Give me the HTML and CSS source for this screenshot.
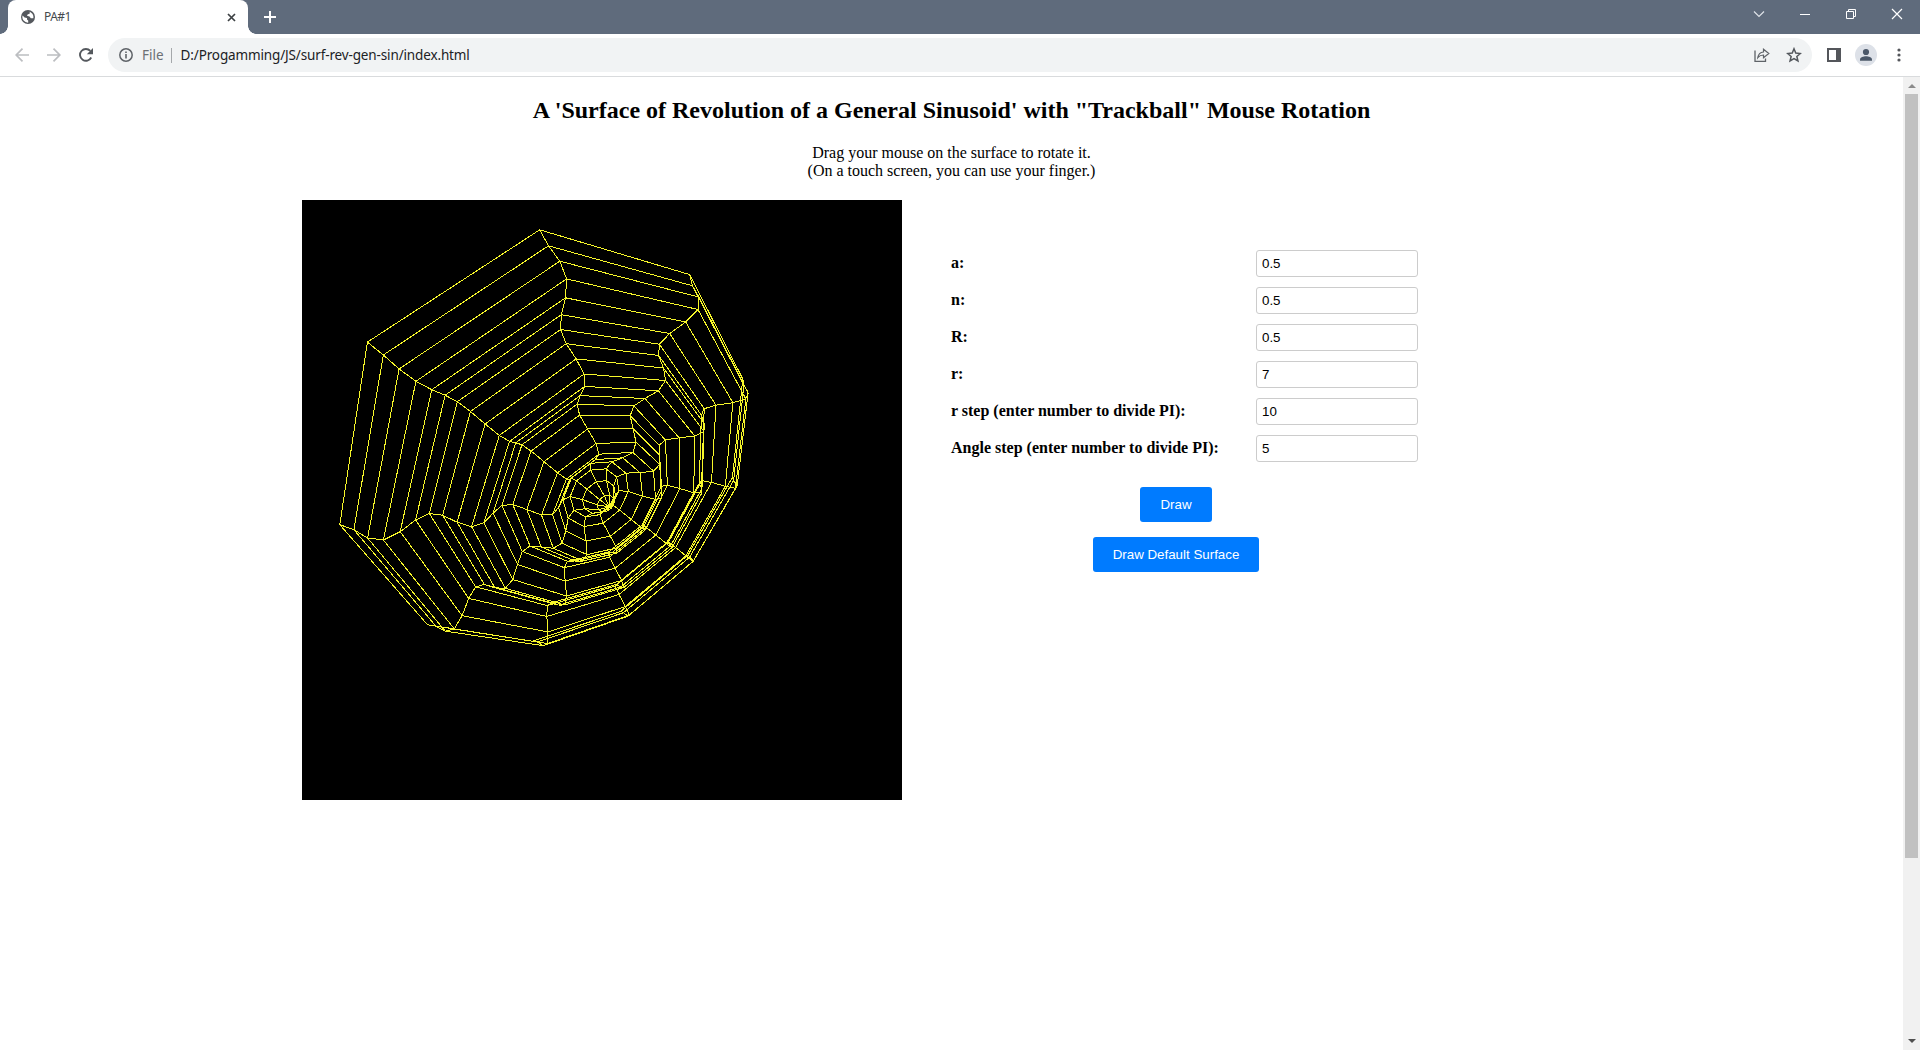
FILE: index.html
```html
<!DOCTYPE html>
<html lang="en">
<head>
<meta charset="utf-8">
<title>PA#1</title>
<link rel="stylesheet" href="styles.css">
</head>
<body>
<header class="browser">
  <div class="tabstrip">
    <div class="tab">
      <svg class="globe" width="14" height="14" viewBox="0 0 14 14"><circle cx="7" cy="7" r="7" fill="#54585d"/><path d="M1.600 5.600 3.600 7.600 6 8v1.500l1.200 1v2.200A5.600 5.600 0 0 1 1.600 5.600ZM7.400 1.500 8.800 2.200v1.300L6.600 4.400 6 5.800 8.500 6.400l1.300 1.800 2.500 0A5.600 5.600 0 0 0 7.400 1.500Z" fill="#fff"/></svg>
      <span class="tab-title">PA#1</span>
      <svg class="close" width="9" height="9" viewBox="0 0 9 9"><path d="M1 1l7 7M8 1l-7 7" stroke="#3c4043" stroke-width="1.700"/></svg>
    </div>
    <svg class="plus" width="12" height="12" viewBox="0 0 12 12"><path d="M6 0v12M0 6h12" stroke="#fff" stroke-width="2"/></svg>
    <div class="window-buttons">
      <svg width="12" height="12" viewBox="0 0 12 12"><path d="M1 3.500l5 5 5-5" fill="none" stroke="#dfe3e8" stroke-width="1.200"/></svg>
      <svg width="12" height="12" viewBox="0 0 12 12"><path d="M1 6.500h10" stroke="#fff"/></svg>
      <svg width="12" height="12" viewBox="0 0 12 12"><path d="M1.500 3.500h7v7h-7zM3.500 3.500v-2h7v7h-2" fill="none" stroke="#fff"/></svg>
      <svg width="12" height="12" viewBox="0 0 12 12"><path d="M1 1l10 10M11 1L1 11" stroke="#fff" stroke-width="1.200"/></svg>
    </div>
  </div>
  <div class="toolbar">
    <svg class="nav" width="14" height="14" viewBox="0 0 14 14"><path d="M14 7H1M7.500 .7L1.200 7l6.300 6.300" fill="none" stroke="#bcbec1" stroke-width="1.700"/></svg>
    <svg class="nav" width="14" height="14" viewBox="0 0 14 14"><path d="M0 7h13M6.500 .7L12.800 7l-6.300 6.300" fill="none" stroke="#bcbec1" stroke-width="1.700"/></svg>
    <svg class="nav" width="14" height="14" viewBox="0 0 14 14"><path d="M12.200 9.500A5.900 5.900 0 1 1 11.300 2.900" fill="none" stroke="#54585d" stroke-width="1.900"/><path d="M14 0v6.200H7.800z" fill="#54585d"/></svg>
    <div class="omnibox">
      <svg width="14" height="14" viewBox="0 0 14 14"><circle cx="7" cy="7" r="6.200" fill="none" stroke="#5f6368" stroke-width="1.500"/><path d="M7 6v4.500M7 3.400V5" stroke="#5f6368" stroke-width="1.600"/></svg>
      <span class="scheme">File</span>
      <span class="url">D:/Progamming/JS/surf-rev-gen-sin/index.html</span>
      <svg class="share" width="16" height="14" viewBox="0 0 16 14"><path d="M1 2.500v11h10.500v-3" fill="none" stroke="#5f6368" stroke-width="1.300"/><path d="M3.800 9.700C4.300 6 6.500 4.200 9.500 4V1.200L14.800 5.500 9.500 9.700V7C7 7 5.300 7.800 3.800 9.700Z" fill="none" stroke="#5f6368" stroke-width="1.200"/></svg>
      <svg width="16" height="16" viewBox="0 0 16 16"><path d="M8 1.800l1.750 4.300 4.600.4-3.500 3 1.100 4.500L8 11.600 4.050 14l1.100-4.500-3.500-3 4.600-.4z" fill="none" stroke="#54585d" stroke-width="1.500"/></svg>
    </div>
    <svg class="panel" width="14" height="14" viewBox="0 0 14 14"><path d="M0 0h14v14H0zM2 2v10h7V2z" fill="#54565b" fill-rule="evenodd"/></svg>
    <svg class="avatar" width="22" height="22" viewBox="0 0 22 22"><circle cx="11" cy="11" r="11" fill="#dde1e8"/><circle cx="11" cy="8" r="3.100" fill="#4b5869"/><path d="M5 16.800v-1.300c0-2.200 3.500-3.200 6-3.200s6 1 6 3.200v1.300z" fill="#4b5869"/></svg>
    <svg class="menu" width="4" height="14" viewBox="0 0 4 14"><g fill="#54565b"><circle cx="2" cy="2" r="1.600"/><circle cx="2" cy="7" r="1.600"/><circle cx="2" cy="12" r="1.600"/></g></svg>
  </div>
</header>
<div class="viewport">
  <main>
    <h2>A 'Surface of Revolution of a General Sinusoid' with "Trackball" Mouse Rotation</h2>
    <p>Drag your mouse on the surface to rotate it.<br>(On a touch screen, you can use your finger.)</p>
    <div class="workspace">
      <svg class="surface" width="600" height="600" viewBox="0 0 600 600"><path id="mesh"/></svg>
      <form>
        <div class="row"><label for="a">a:</label><input id="a" value="0.5"></div>
        <div class="row"><label for="n">n:</label><input id="n" value="0.5"></div>
        <div class="row"><label for="R">R:</label><input id="R" value="0.5"></div>
        <div class="row"><label for="r">r:</label><input id="r" value="7"></div>
        <div class="row"><label for="rs">r step (enter number to divide PI):</label><input id="rs" value="10"></div>
        <div class="row"><label for="as">Angle step (enter number to divide PI):</label><input id="as" value="5"></div>
        <div class="actions"><button type="button">Draw</button><button type="button">Draw Default Surface</button></div>
      </form>
    </div>
  </main>
  <div class="scrollbar"><i class="up"></i><div class="thumb"></div><i class="down"></i></div>
</div>
<script src="surface.js"></script>
</body>
</html>
```
FILE: styles.css
```css
* { box-sizing: border-box; }
body { margin: 0; height: 1050px; display: flex; flex-direction: column; overflow: hidden; background: #fff; color: #000; font: 16px "Liberation Serif", serif; }
svg { display: block; flex: none; }
.browser { font-family: "Noto Sans", sans-serif; flex: none; }
.tabstrip { height: 34px; background: #5f6b7c; display: flex; align-items: flex-start; padding-left: 8px; }
.tab { position: relative; width: 240px; height: 34px; background: #fff; border-radius: 8px 8px 0 0; display: flex; align-items: center; padding: 0 12px 0 13px; }
.tab::before, .tab::after { content: ""; position: absolute; bottom: 0; width: 8px; height: 8px; }
.tab::before { left: -8px; background: radial-gradient(circle at 0 0, #5f6b7c 7.500px, #fff 8px); }
.tab::after { right: -8px; background: radial-gradient(circle at 100% 0, #5f6b7c 7.500px, #fff 8px); }
.tab-title { margin-left: 9px; padding-bottom: 2px; font-size: 12px; color: #45494d; flex: 1; letter-spacing: -.5px; }
.plus { margin: 11px 0 0 16px; }
.window-buttons { margin: 8px 17px 0 auto; display: flex; gap: 34px; }
.toolbar { height: 43px; border-bottom: 1px solid #d9dbdd; display: flex; align-items: center; padding: 0 19px 0 15px; }
.nav { margin-right: 18px; }
.omnibox { flex: 1; margin-left: -3px; height: 34px; border-radius: 17px; background: #f1f3f4; display: flex; align-items: center; padding: 0 10px 0 11px; font-size: 13.500px; color: #202124; }
.scheme { color: #6c7075; margin-left: 9px; padding-right: 7px; border-right: 1px solid #a5a8ab; line-height: 15px; }
.url { flex: 1; margin-left: 9px; letter-spacing: -.14px; }
.share { margin-right: 16px; }
.panel { margin-left: 15px; }
.avatar { margin-left: 14px; }
.menu { margin-left: 20px; }
.viewport { flex: 1; display: flex; }
main { flex: 1; text-align: center; }
h2 { margin: 19px 0; font-size: 24px; line-height: 28px; }
p { margin: 20px 0 0; line-height: 18px; }
.workspace { display: flex; align-items: flex-start; margin: 20px 0 0 302px; }
.surface { background: #000; }
#mesh { fill: none; stroke: #f6f62a; stroke-width: 1; shape-rendering: crispEdges; }
form { margin: 50px 0 0 49px; width: 467px; }
.row { display: flex; justify-content: space-between; align-items: center; height: 27px; margin-bottom: 10px; }
label { font-weight: bold; padding-bottom: 1px; }
input { width: 162px; height: 27px; border: 1px solid #ccc; border-radius: 3px; padding: 5px; font: 13.333px "Liberation Sans", sans-serif; }
.actions { display: flex; flex-direction: column; align-items: center; gap: 15px; margin: 25px 17px 0 0; }
button { border: 0; height: 35px; padding: 0 20px; border-radius: 3px; background: #007bff; color: #fff; font: 13.333px "Liberation Sans", sans-serif; }
.scrollbar { width: 17px; background: #f1f1f1; display: flex; flex-direction: column; align-items: center; padding: 7px 0; }
.up, .down { border: 4px solid transparent; height: 0; }
.up { border-top: 0; border-bottom-color: #8b8b8b; }
.down { border-bottom: 0; border-top-color: #505050; margin-top: auto; }
.thumb { width: 13px; height: 764px; margin-top: 6px; background: #c1c1c1; }
```
FILE: surface.js
```js
// Wireframe of the surface z = a * cos(n * PI * r / R), swept around the z axis.
const a = 0.5, n = 0.5, R = 0.5, rMax = 7;
const rStep = Math.PI / 10, angleStep = Math.PI / 5;

// Combined rotation, perspective and viewport transform.
const view = [
  [-22.020527, 34.991973, -8.980224, 300.013568],
  [-41.268675, -2.786946, -9.218705, 299.880363],
  [-0.05733605, 0.02914311, -0.075476, 1]
];

function vertex(ring, spoke) {
  const r = ring * rStep, t = spoke * angleStep;
  const p = [r * Math.cos(t), r * Math.sin(t), a * Math.cos(n * Math.PI * r / R), 1];
  const [x, y, w] = view.map(row => row.reduce((sum, m, i) => sum + m * p[i], 0));
  return (x / w).toFixed(1) + ' ' + (y / w).toFixed(1);
}

const rings = Math.floor(rMax / rStep), spokes = 10;
let d = '';
for (let s = 0; s < spokes; s++) {
  for (let k = 0; k <= rings; k++) {
    if (k < rings) d += 'M' + vertex(k, s) + 'L' + vertex(k + 1, s);
    if (k > 0) d += 'M' + vertex(k, s) + 'L' + vertex(k, s + 1);
  }
}
document.getElementById('mesh').setAttribute('d', d);
```
